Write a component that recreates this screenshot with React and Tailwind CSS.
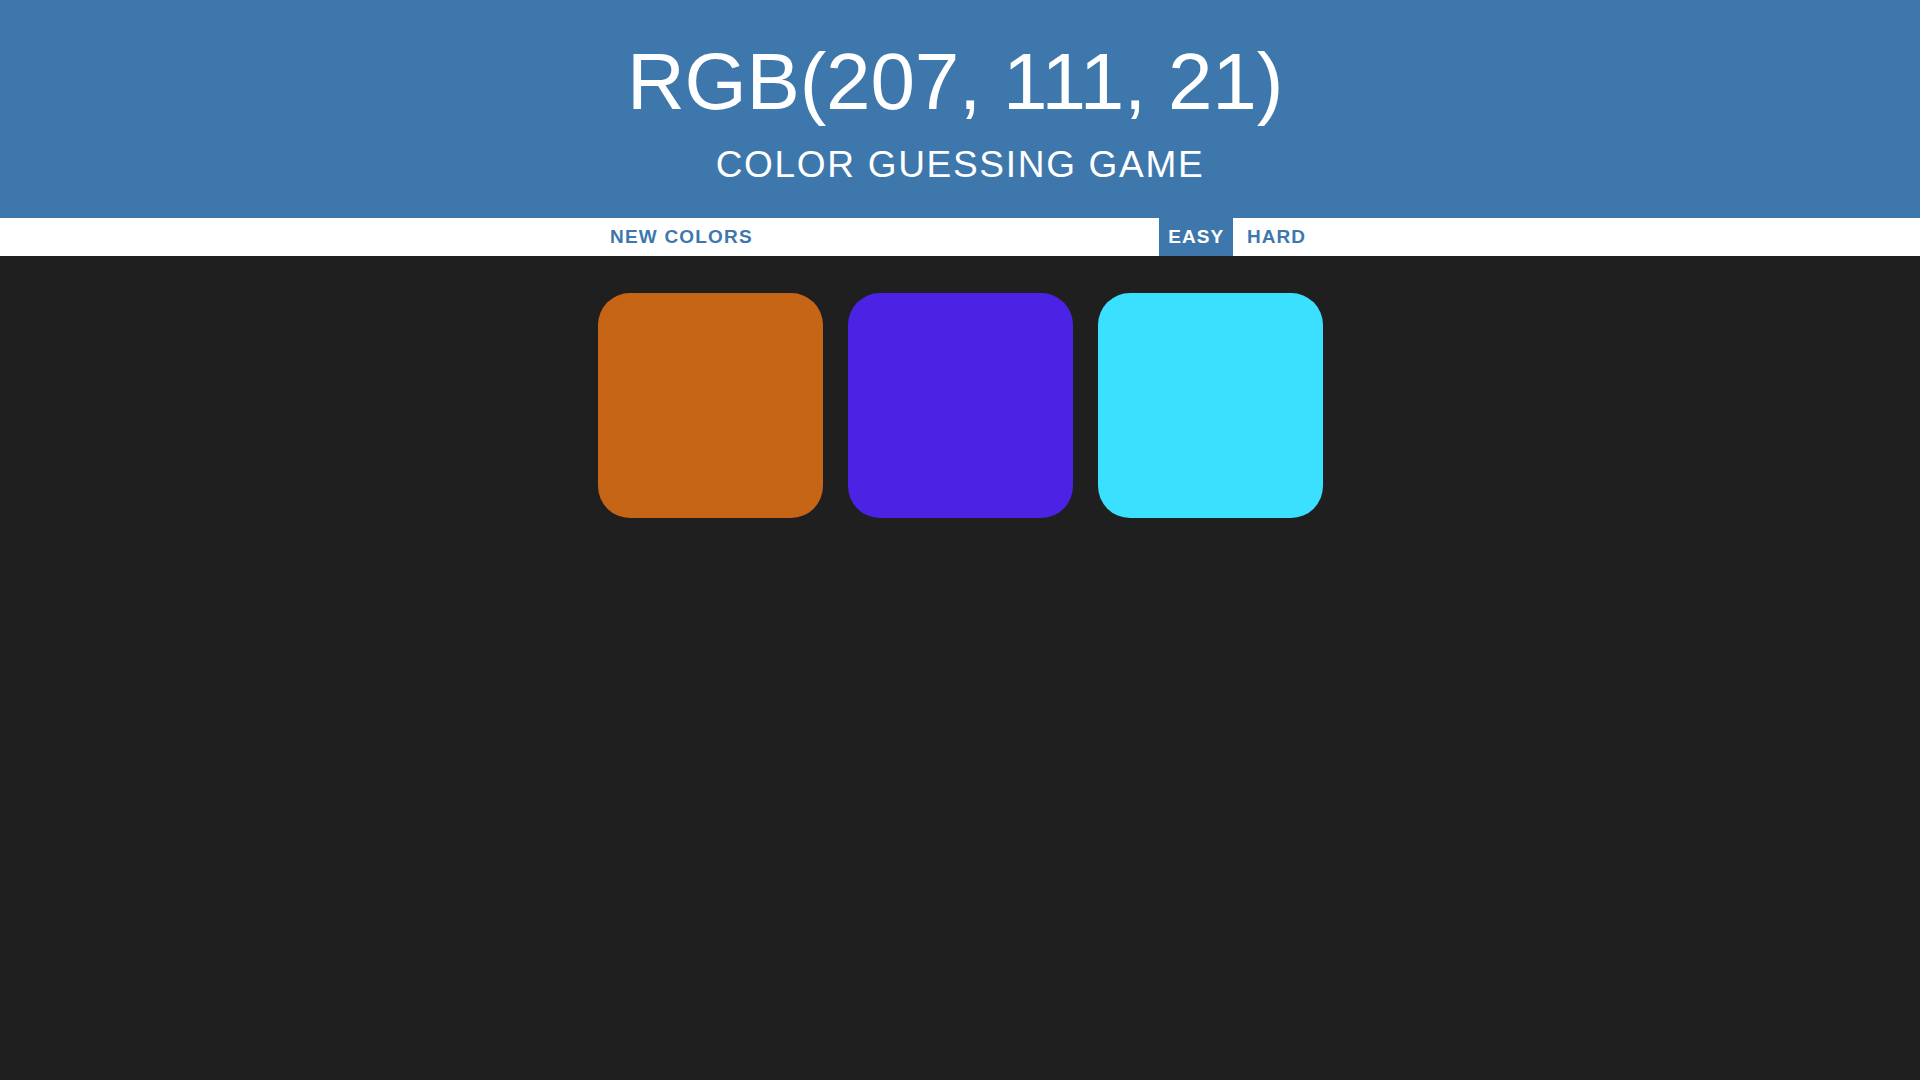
export default function App() {
  const squares = ["#c76516", "#4c23e4", "#3ce0ff"];
  return (
    <div className="min-h-screen w-full bg-[#1f1f1f]" style={{ fontFamily: '"Liberation Sans", Arial, sans-serif' }}>
      <header className="h-[218px] bg-[#3e77ac] text-white flex flex-col items-center">
        <h1 className="mt-[37px] pr-[10px] text-[80px] leading-[90px] font-normal tracking-[-0.2px]">RGB(207, 111, 21)</h1>
        <h2 className="mt-[18px] text-[37px] leading-[40px] font-normal tracking-[1.7px]">COLOR GUESSING GAME</h2>
      </header>
      <nav className="h-[38px] bg-white">
        <div className="mx-auto w-[720px] h-full flex items-stretch justify-between">
          <button className="px-[10px] text-[19px] font-bold tracking-[1.2px] text-[#3e77ac] uppercase">New Colors</button>
          <div className="flex items-stretch">
            <button className="px-[9px] bg-[#3e77ac] text-white text-[19px] font-bold tracking-[1px] uppercase">Easy</button>
            <button className="px-[14px] text-[#3e77ac] text-[19px] font-bold tracking-[1px] uppercase">Hard</button>
          </div>
        </div>
      </nav>
      <main className="mx-auto w-[750px] pt-[37px] flex justify-center gap-[25px]">
        {squares.map((c) => (
          <div key={c} className="w-[225px] h-[225px] rounded-[32px]" style={{ backgroundColor: c }} />
        ))}
      </main>
    </div>
  );
}
